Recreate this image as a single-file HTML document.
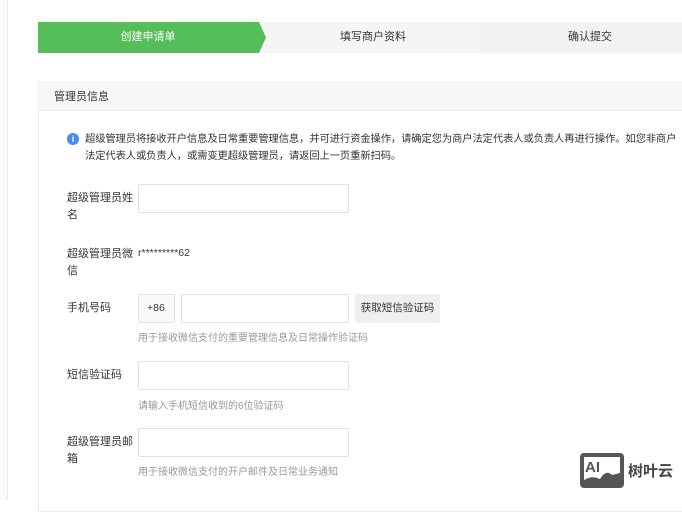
<!DOCTYPE html>
<html><head><meta charset="utf-8"><style>
*{margin:0;padding:0;box-sizing:border-box}
body{width:682px;height:500px;overflow:hidden;background:#fff;font-family:"Liberation Sans","Noto Sans CJK SC",sans-serif;color:#333;position:relative}
.a{position:absolute}
.lbl{font-size:11px;line-height:17px;color:#353535;width:66px}
.inp{border:1px solid #e2e2e2;border-radius:2px;background:#fff;height:29px}
.hint{font-size:10px;color:#999}
</style></head><body>
<div class="a" style="left:0;top:0;width:8px;height:500px;background:#fafafa;border-right:1px solid #ececec"></div>
<div class="a" style="left:38px;top:22px;width:644px;height:31px;background:#f5f5f5"></div>
<div class="a" style="left:480px;top:22px;width:202px;height:31px;background:#f2f2f2"></div>
<svg class="a" style="left:38px;top:22px" width="230" height="31"><polygon points="0,0 221,0 228,15.5 221,31 0,31" fill="#56bd5b"/></svg>
<div class="a" style="left:38px;top:22px;width:220px;line-height:31px;text-align:center;font-size:11px;color:#fff">创建申请单</div>
<div class="a" style="left:268px;top:22px;width:210px;line-height:31px;text-align:center;font-size:11px;color:#333">填写商户资料</div>
<div class="a" style="left:480px;top:22px;width:220px;line-height:31px;text-align:center;font-size:11px;color:#333">确认提交</div>
<div class="a" style="left:38px;top:82px;width:650px;height:430px;border:1px solid #eee;border-right:none"></div>
<div class="a" style="left:39px;top:83px;width:643px;height:28px;background:#f7f7f7;border-bottom:1px solid #eee;font-size:11px;line-height:28px;padding-left:15px">管理员信息</div>
<div class="a" style="left:67px;top:133px;width:12px;height:12px;border-radius:50%;background:#4a8af4;color:#fff;font-size:9px;line-height:12px;text-align:center;font-weight:bold">i</div>
<div class="a" style="left:85px;top:131px;width:600px;font-size:10.3px;line-height:17px;color:#333;letter-spacing:-0.1px">超级管理员将接收开户信息及日常重要管理信息，并可进行资金操作，请确定您为商户法定代表人或负责人再进行操作。如您非商户<br>法定代表人或负责人，或需变更超级管理员，请返回上一页重新扫码。</div>

<div class="a lbl" style="left:67px;top:190px">超级管理员姓名</div>
<div class="a inp" style="left:138px;top:184px;width:211px"></div>

<div class="a lbl" style="left:67px;top:246px">超级管理员微信</div>
<div class="a" style="left:138px;top:246px;font-size:10.5px;line-height:14px">r*********62</div>

<div class="a lbl" style="left:67px;top:300px">手机号码</div>
<div class="a inp" style="left:138px;top:294px;width:37px;background:#fafafa;font-size:10.5px;line-height:27px;padding-left:8px">+86</div>
<div class="a inp" style="left:181px;top:294px;width:168px"></div>
<div class="a" style="left:355px;top:294px;width:85px;height:29px;background:#efefef;border-radius:2px;font-size:10.5px;line-height:29px;text-align:center">获取短信验证码</div>
<div class="a hint" style="left:138px;top:329px">用于接收微信支付的重要管理信息及日常操作验证码</div>

<div class="a lbl" style="left:67px;top:367px">短信验证码</div>
<div class="a inp" style="left:138px;top:361px;width:211px"></div>
<div class="a hint" style="left:138px;top:397px">请输入手机短信收到的6位验证码</div>

<div class="a lbl" style="left:67px;top:434px">超级管理员邮箱</div>
<div class="a inp" style="left:138px;top:428px;width:211px"></div>
<div class="a hint" style="left:138px;top:463px">用于接收微信支付的开户邮件及日常业务通知</div>

<svg class="a" style="left:580px;top:453px" width="44" height="35"><rect x="0" y="0" width="44" height="35" rx="4" fill="#555"/><rect x="4" y="4" width="36" height="27" fill="#fff"/><text x="5" y="19" font-family="Liberation Sans" font-weight="bold" font-size="15" fill="#555">AI</text><path d="M4 27 Q12 22 20 26 Q26 16 32 22 L40 20 L40 31 L4 31Z" fill="#555"/></svg>
<div class="a" style="left:628px;top:460px;font-size:15px;color:#444;font-weight:bold">树叶云</div>
</body></html>
